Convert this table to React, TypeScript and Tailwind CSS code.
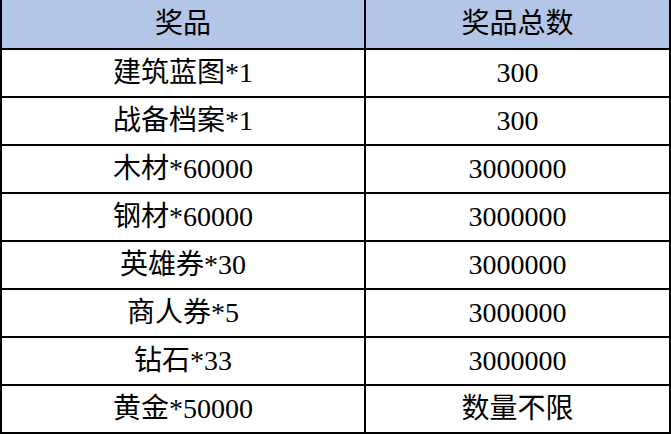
import React from "react";

const rows: [string, string][] = [
  ["建筑蓝图*1", "300"],
  ["战备档案*1", "300"],
  ["木材*60000", "3000000"],
  ["钢材*60000", "3000000"],
  ["英雄券*30", "3000000"],
  ["商人券*5", "3000000"],
  ["钻石*33", "3000000"],
  ["黄金*50000", "数量不限"],
];

export default function App() {
  return (
    <div
      className="w-[671px] h-[434px] bg-white text-black text-[28px] leading-none"
      style={{ fontFamily: '"Liberation Serif", "Noto Sans CJK SC", serif' }}
    >
      <div className="border-l-2 border-r-2 border-black">
        <div className="grid grid-cols-[364px_1fr] h-[50px] bg-[#b4c6e7] border-b-2 border-black">
          <div className="flex items-center justify-center border-r-2 border-black">奖品</div>
          <div className="flex items-center justify-center">奖品总数</div>
        </div>
        {rows.map(([a, b]) => (
          <div key={a} className="grid grid-cols-[364px_1fr] h-[48px] border-b-2 border-black">
            <div className="flex items-center justify-center border-r-2 border-black">{a}</div>
            <div className="flex items-center justify-center">{b}</div>
          </div>
        ))}
      </div>
    </div>
  );
}
